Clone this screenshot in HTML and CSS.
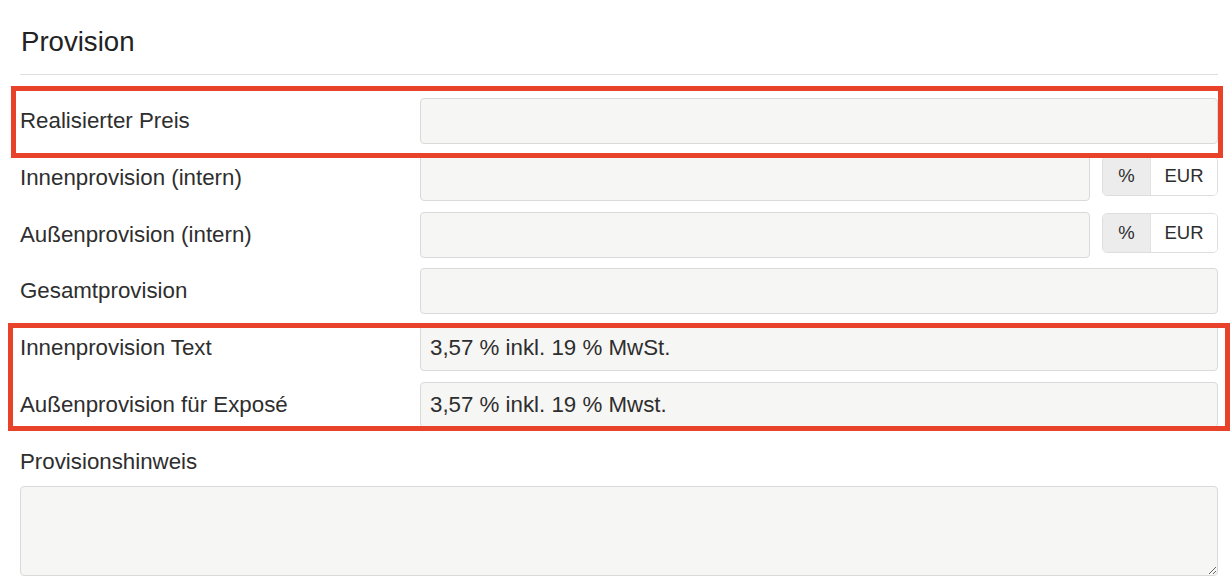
FILE: index.html
```html
<!DOCTYPE html>
<html lang="de">
<head>
<meta charset="utf-8">
<title>Provision</title>
<link rel="stylesheet" href="styles.css">
</head>
<body>
<div class="page">
  <h2 class="title">Provision</h2>
  <div class="divider"></div>
  <form class="form">
    <div class="row">
      <label class="label">Realisierter Preis</label>
      <div class="field"><input class="input" type="text" value=""></div>
    </div>
    <div class="row">
      <label class="label">Innenprovision (intern)</label>
      <div class="field">
        <input class="input" type="text" value="">
        <div class="unit-group"><span class="unit active">%</span><span class="unit">EUR</span></div>
      </div>
    </div>
    <div class="row">
      <label class="label">Außenprovision (intern)</label>
      <div class="field">
        <input class="input" type="text" value="">
        <div class="unit-group"><span class="unit active">%</span><span class="unit">EUR</span></div>
      </div>
    </div>
    <div class="row">
      <label class="label">Gesamtprovision</label>
      <div class="field"><input class="input" type="text" value=""></div>
    </div>
    <div class="row">
      <label class="label">Innenprovision Text</label>
      <div class="field"><input class="input" type="text" value="3,57 % inkl. 19 % MwSt."></div>
    </div>
    <div class="row">
      <label class="label">Außenprovision für Exposé</label>
      <div class="field"><input class="input" type="text" value="3,57 % inkl. 19 % Mwst."></div>
    </div>
    <div class="block">
      <label class="label block-label">Provisionshinweis</label>
      <textarea class="textarea"></textarea>
    </div>
  </form>
  <div class="highlight highlight-one"></div>
  <div class="highlight highlight-two"></div>
</div>
</body>
</html>
```

FILE: styles.css
```css
* { box-sizing: border-box; }
html, body { margin: 0; padding: 0; background: #fff; }
body {
  font-family: "Liberation Sans", Arial, sans-serif;
  color: #2e2e2e;
  width: 1230px;
  height: 588px;
  overflow: hidden;
}
.page {
  position: relative;
  padding: 25px 12px 0 20px;
}
.title {
  margin: 0 0 0 1px;
  font-size: 27.6px;
  line-height: 34px;
  font-weight: 400;
  color: #222;
}
.divider {
  margin-top: 15px;
  height: 1px;
  background: #dedede;
}
.form {
  margin-top: 23px;
  display: flex;
  flex-direction: column;
  gap: 10.8px;
}
.row {
  display: grid;
  grid-template-columns: 400px 1fr;
  align-items: center;
  height: 46px;
}
.label {
  font-size: 22.3px;
  line-height: 26px;
  color: #2e2e2e;
}
.field {
  display: flex;
  align-items: center;
  gap: 12px;
  height: 46px;
}
.input {
  flex: 1;
  min-width: 0;
  height: 46px;
  border: 1px solid #dadada;
  border-radius: 4px;
  background: #f6f6f4;
  padding: 0 9px;
  font-family: "Liberation Sans", Arial, sans-serif;
  font-size: 22.3px;
  color: #2e2e2e;
  outline: none;
}
.unit-group {
  display: flex;
  width: 116px;
  height: 40px;
  margin-top: -4px;
  border: 1px solid #dedede;
  border-radius: 5px;
  overflow: hidden;
}
.unit {
  display: flex;
  align-items: center;
  justify-content: center;
  font-size: 18.5px;
  color: #2e2e2e;
  background: #fff;
}
.unit.active {
  width: 48px;
  background: #ececec;
  border-right: 1px solid #e2e2e2;
}
.unit:last-child { flex: 1; }
.block {
  margin-top: 10px;
  display: flex;
  flex-direction: column;
}
.block-label {
  line-height: 26px;
}
.textarea {
  margin-top: 11px;
  width: 100%;
  height: 90px;
  border: 1px solid #dadada;
  border-radius: 4px;
  background: #f6f6f4;
  resize: vertical;
  font-family: "Liberation Sans", Arial, sans-serif;
  font-size: 22px;
  outline: none;
}
.highlight {
  position: absolute;
  border: 5px solid #e8432a;
  pointer-events: none;
}
.highlight-one {
  left: 11px;
  top: 86px;
  width: 1212px;
  height: 72px;
}
.highlight-two {
  left: 8px;
  top: 323px;
  width: 1222px;
  height: 108px;
}
```
